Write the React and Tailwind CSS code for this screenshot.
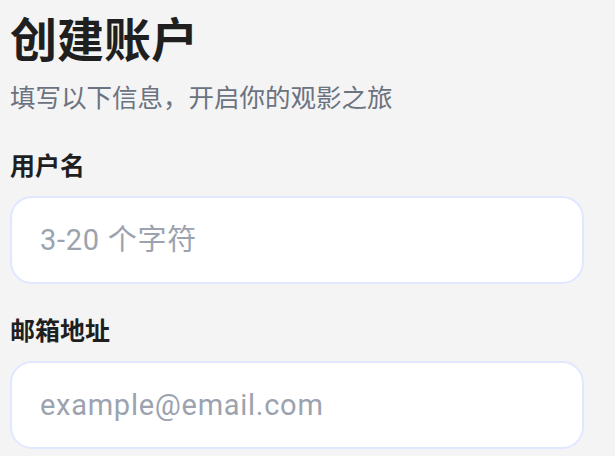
import React from "react";

const font = { fontFamily: "Roboto, 'Noto Sans CJK SC', sans-serif" };

function Field({ label, placeholder, type = "text", className = "" }) {
  return (
    <div className={className}>
      <label className="block text-[25px] leading-[30px] font-bold text-[#1f1f1f]">{label}</label>
      <input
        type={type}
        placeholder={placeholder}
        className="mt-[14px] block w-[574px] h-[88px] rounded-[22px] border-2 border-[#e0e7ff] bg-white px-[28px] text-[29px] text-[#1f1f1f] placeholder:text-[#9ca3af] tracking-wide outline-none"
      />
    </div>
  );
}

export default function App() {
  return (
    <div className="min-h-screen bg-[#f4f4f4] pl-[10px] pt-[13px]" style={font}>
      <h1 className="text-[47px] leading-[56px] font-bold text-[#1f1f1f]">创建账户</h1>
      <p className="mt-[12px] text-[25.5px] leading-[34px] text-[#6b7280]">填写以下信息，开启你的观影之旅</p>
      <form className="mt-[37px]" onSubmit={(e) => e.preventDefault()}>
        <Field label="用户名" placeholder="3-20 个字符" />
        <Field className="mt-[33px]" label="邮箱地址" placeholder="example@email.com" type="email" />
      </form>
    </div>
  );
}
